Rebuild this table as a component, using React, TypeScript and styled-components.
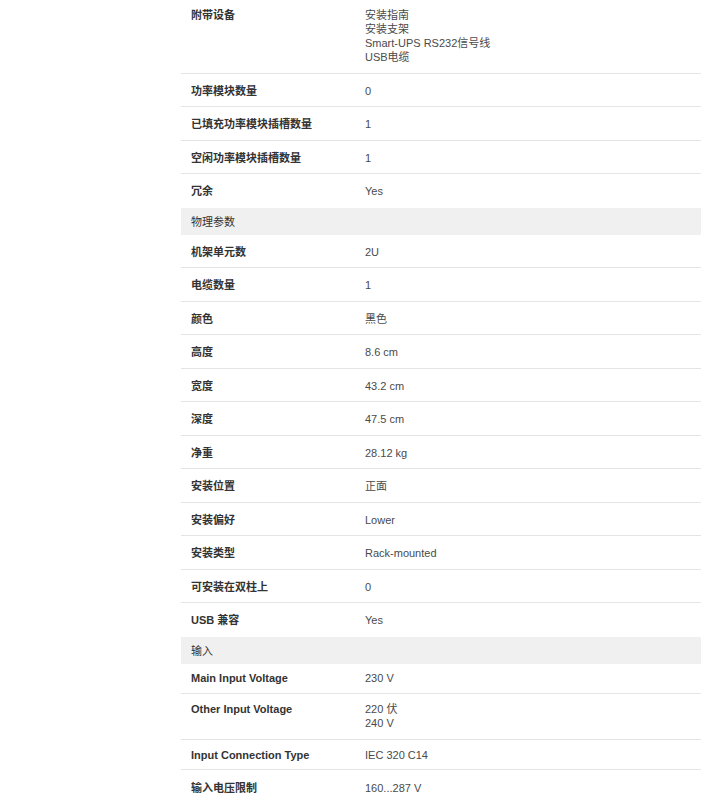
import styled, { createGlobalStyle } from "styled-components";

const GlobalStyle = createGlobalStyle`
    html, body {
        margin: 0;
        padding: 0;
        background: #fff;
    }
    body {
        font-family: "Liberation Sans", Arial, "Noto Sans CJK SC", sans-serif;
        font-size: 11px;
        color: #333;
    }
`;

type Spec = { label: string; value: string | string[] };
type Section = { title?: string; rows: Spec[] };

const sections: Section[] = [
    {
        rows: [
            { label: "附带设备", value: ["安装指南", "安装支架", "Smart-UPS RS232信号线", "USB电缆"] },
            { label: "功率模块数量", value: "0" },
            { label: "已填充功率模块插槽数量", value: "1" },
            { label: "空闲功率模块插槽数量", value: "1" },
            { label: "冗余", value: "Yes" },
        ],
    },
    {
        title: "物理参数",
        rows: [
            { label: "机架单元数", value: "2U" },
            { label: "电缆数量", value: "1" },
            { label: "颜色", value: "黑色" },
            { label: "高度", value: "8.6 cm" },
            { label: "宽度", value: "43.2 cm" },
            { label: "深度", value: "47.5 cm" },
            { label: "净重", value: "28.12 kg" },
            { label: "安装位置", value: "正面" },
            { label: "安装偏好", value: "Lower" },
            { label: "安装类型", value: "Rack-mounted" },
            { label: "可安装在双柱上", value: "0" },
            { label: "USB 兼容", value: "Yes" },
        ],
    },
    {
        title: "输入",
        rows: [
            { label: "Main Input Voltage", value: "230 V" },
            { label: "Other Input Voltage", value: ["220 伏", "240 V"] },
            { label: "Input Connection Type", value: "IEC 320 C14" },
            { label: "输入电压限制", value: "160...287 V" },
        ],
    },
];

// page is scrolled a little into the spec list
const Page = styled.div`
    display: flex;
    margin-top: -2px;
    padding: 0 11px 0 181px;
`;

const SpecTable = styled.div`
    flex: 1;
    display: flex;
    flex-direction: column;
`;

const SectionTitle = styled.div`
    background: #f0f0f0;
    padding: 5.5px 10px;
    color: #333;
`;

const Row = styled.div<{ $last?: boolean }>`
    display: grid;
    grid-template-columns: 174px 1fr;
    align-items: baseline;
    align-content: center;
    min-height: 29.7px;
    border-bottom: 1px solid ${(p) => (p.$last ? "transparent" : "#e4e4e4")};
`;

const Label = styled.div`
    padding: 8.25px 10px;
    font-weight: bold;
    color: #333;
`;

const Value = styled.div`
    padding: 8.25px 10px;
    color: #4a4a4a;
`;

const ValueLine = styled.div`
    line-height: 14px;
`;

export default function App() {
    return (
        <>
            <GlobalStyle />
            <Page>
                <SpecTable>
                    {sections.map((section, si) => (
                        <div key={si}>
                            {section.title && <SectionTitle>{section.title}</SectionTitle>}
                            {section.rows.map((row, ri) => (
                                <Row key={row.label} $last={ri === section.rows.length - 1 && si < sections.length - 1}>
                                    <Label>{row.label}</Label>
                                    <Value>
                                        {Array.isArray(row.value)
                                            ? row.value.map((v) => <ValueLine key={v}>{v}</ValueLine>)
                                            : row.value}
                                    </Value>
                                </Row>
                            ))}
                        </div>
                    ))}
                </SpecTable>
            </Page>
        </>
    );
}
